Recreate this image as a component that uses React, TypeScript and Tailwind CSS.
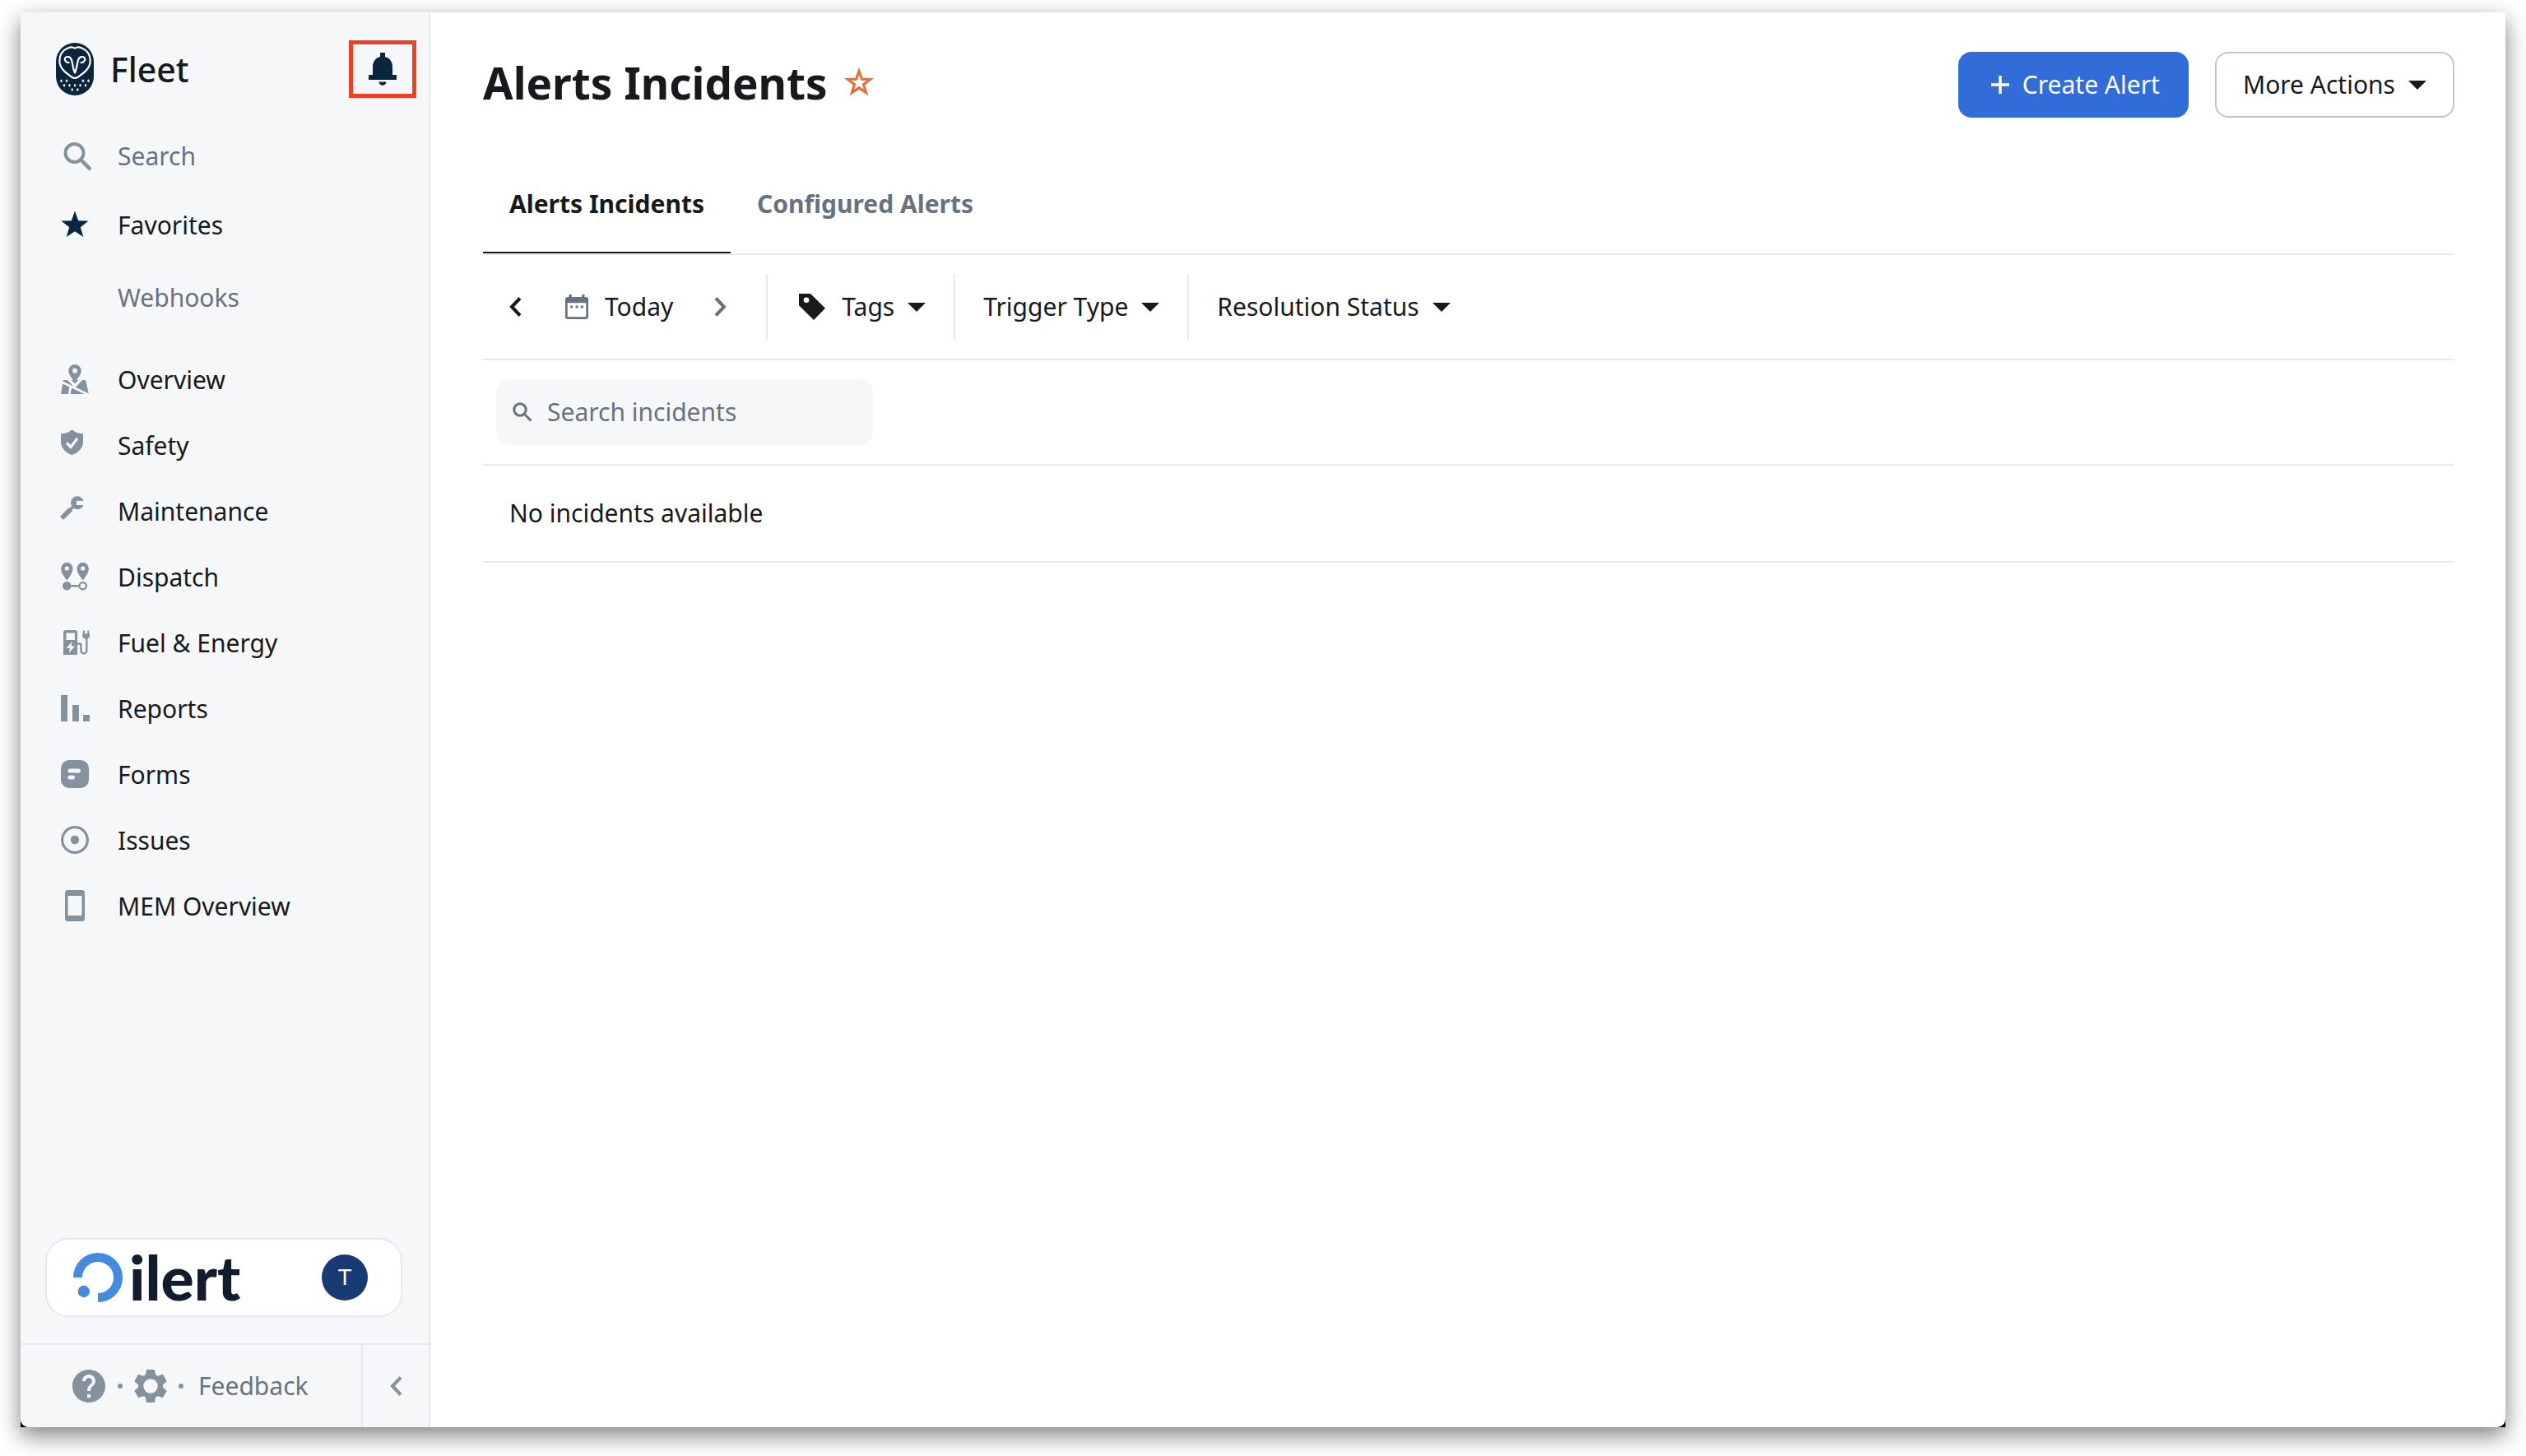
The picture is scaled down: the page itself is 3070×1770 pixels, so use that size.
import type { ReactNode } from "react";
import { MdHelp } from "react-icons/md";

function OwlLogo() {
  return (
    <svg viewBox="0 0 46 64" className="h-16 w-[46px] shrink-0" aria-hidden="true">
      <rect width="46" height="64" rx="23" fill="#0a253d" />
      <g fill="none" stroke="#fff" strokeWidth="2.2" strokeLinecap="round" strokeLinejoin="round">
        <path d="M23 6.7C20.5 5 17.500 5.200 15 6.200C8 9 4.300 15 4.300 22C4.300 32 14 38 19 41.500C21.500 43.300 24.500 43.300 27 41.500C32 38 41.700 32 41.700 22C41.700 15 38 9 31 6.200C28.500 5.200 25.500 5 23 6.700Z" />
        <path d="M15.500 24.200C12.500 24.500 10 21 11 18.800C12.500 16 17.500 16.300 19 21C20.500 26 21 33 23 36.500C25 33 25.500 26 27 21C28.500 16.300 33.500 16 35 18.800C36 21 33.500 24.500 30.500 24.200" />
      </g>
      <g fill="#fff">
        {[[6.5, 46.3], [13, 46.3], [33, 46.3], [39.5, 46.3], [10, 51.7], [16.5, 51.7], [23, 51.7], [29.5, 51.7], [36, 51.7], [19.7, 57], [26.3, 57]].map(([x, y]) => (
          <ellipse key={`${x}-${y}`} cx={x} cy={y} rx="1.2" ry="1.8" />
        ))}
      </g>
    </svg>
  );
}

function BellIcon() {
  return (
    <svg viewBox="0 0 34 40" className="h-10 w-[34px]" fill="#0a253d" aria-hidden="true">
      <path d="M14 0h6v5c5.500 1.300 9 6 9 12v10h5v6H0v-6h5V17C5 11 8.500 6.300 14 5Z" />
      <path d="M12.500 35.500h9c0 2.500-2 4.200-4.500 4.200s-4.500-1.700-4.500-4.200Z" />
    </svg>
  );
}

function NavIcon({ children }: { children?: ReactNode }) {
  return (
    <svg viewBox="0 0 36 40" className="h-10 w-9 shrink-0 overflow-visible" fill="#84919f" aria-hidden="true">
      {children}
    </svg>
  );
}

const BG = "#f6f7f9";
const INK = "#84919f";

const icons: Record<string, ReactNode> = {
  Overview: (
    <>
      <path d="M4 20h27l4 17H1Z" />
      <path d="M8.500 17L18 27L27.500 17" fill="none" stroke={BG} strokeWidth="3.500" />
      <path d="M1 22L35 38M13 28L11 38" stroke={BG} strokeWidth="2.800" />
      <path d="M18 22.500C14 17.500 10.300 13 10.300 8.700a7.700 7.700 0 0 1 15.400 0C25.700 13 22 17.500 18 22.500Z" />
      <circle cx="18" cy="8.700" r="3" fill={BG} />
    </>
  ),
  Safety: (
    <>
      <path d="M14.500 0C17 3 22 5 28 5v10c0 7.500-6 14-13.500 16C7 29 1 22.500 1 15V5C7 5 12 3 14.500 0Z" />
      <path d="M8 16.500l5 5L21 11" fill="none" stroke={BG} strokeWidth="3.200" />
    </>
  ),
  Maintenance: (
    <>
      <circle cx="21" cy="9.300" r="8" />
      <path d="M20 6.800h10v5.200H20Z" fill={BG} />
      <path d="M2 28L13 17" stroke={INK} strokeWidth="6" />
      <path d="M11 19L18 12" stroke={INK} strokeWidth="3.500" />
    </>
  ),
  Dispatch: (
    <>
      {[8.3, 27.7].map((x) => (
        <g key={x} transform={`translate(${x} 9)`}>
          <path d="M0 14.500C-3.800 9.500-7.200 5-7.200 0a7.200 7.200 0 0 1 14.400 0C7.200 5 3.800 9.500 0 14.500Z" />
          <circle r="2.600" fill={BG} />
        </g>
      ))}
      <path d="M8 30.300h15" stroke={INK} strokeWidth="2.500" />
      <circle cx="8.300" cy="30.300" r="5.300" />
      <circle cx="27.700" cy="30.300" r="4.200" fill="none" stroke={INK} strokeWidth="2.300" />
    </>
  ),
  "Fuel & Energy": (
    <>
      <path d="M4 7a3 3 0 0 1 3-3h11a3 3 0 0 1 3 3v27H4Z" />
      <path d="M7.500 7.500h10.500v8.500H7.500Z" fill={BG} />
      <path d="M14.500 18L7.500 26h4.500L10.800 32L18 23.500h-4.200Z" fill={BG} />
      <path d="M21 20.500h2.500q2 0 2 2V29a3.300 3.300 0 0 0 6.800 0V12" fill="none" stroke={INK} strokeWidth="2.400" />
      <path d="M28 4.500h2.200v4h3V4.500h2.200v4H36v3.500L33.500 14.500h-4L27.200 12V8.500h.8Z" />
    </>
  ),
  Reports: <path d="M1 3h8v32H1ZM15 15h8v20h-8ZM28 27h8v8h-8Z" />,
  Forms: (
    <>
      <rect x="1" y="2" width="34" height="34" rx="10" />
      <rect x="9.500" y="12.500" width="15.500" height="5" rx="2.500" fill={BG} />
      <rect x="9.500" y="20.500" width="8.500" height="5" rx="2.500" fill={BG} />
    </>
  ),
  Issues: (
    <>
      <circle cx="18" cy="19" r="15.400" fill="none" stroke={INK} strokeWidth="3.200" />
      <circle cx="18" cy="19" r="5.200" />
    </>
  ),
  "MEM Overview": (
    <>
      <rect x="6" y="0" width="24" height="38" rx="3.500" />
      <path d="M9.500 7h17v24h-17Z" fill={BG} />
    </>
  ),
};

const STAR = "M18 2.500L22.200 14.200L34.600 14.600L24.800 22.200L28.300 34.100L18 27.200L7.700 34.100L11.200 22.200L1.400 14.600L13.800 14.200Z";

function Chevron({ dir, className }: { dir: "left" | "right"; className: string }) {
  return (
    <svg viewBox="0 0 15 24" className={`h-6 w-[15px] shrink-0 ${className}`} fill="none" stroke="currentColor" strokeWidth="4" aria-hidden="true">
      <path d={dir === "left" ? "M13 1.500L3 12L13 22.500" : "M2 1.500L12 12L2 22.500"} />
    </svg>
  );
}

function Caret() {
  return (
    <svg viewBox="0 0 22 11" className="h-[11px] w-[22px] shrink-0" fill="currentColor" aria-hidden="true">
      <path d="M0 0h22L11 11Z" />
    </svg>
  );
}

function CalendarIcon() {
  return (
    <svg viewBox="0 0 28 30" className="h-[30px] w-7 shrink-0" fill="#667282" aria-hidden="true">
      <path d="M4.500 0h3.300v3h12.400V0h3.300v3H25a3 3 0 0 1 3 3v21a3 3 0 0 1-3 3H3a3 3 0 0 1-3-3V6a3 3 0 0 1 3-3h1.500ZM2.700 10.300v17h22.600v-17Z" fillRule="evenodd" />
      <path d="M6.200 13.500h3v3h-3ZM12.500 13.500h3v3h-3ZM18.800 13.500h3v3h-3Z" />
    </svg>
  );
}

function TagIcon() {
  return (
    <svg viewBox="0 0 32 32" className="h-8 w-8 shrink-0" aria-hidden="true">
      <path d="M0 0h14L32 17.700L18 32L0 14.300Z" fill="#17191c" />
      <circle cx="9" cy="7.700" r="3.300" fill="#fff" />
    </svg>
  );
}

function GearIcon() {
  return (
    <svg viewBox="-20 -20 40 40" className="size-10" fill="#84919f" aria-hidden="true">
      <defs>
        <mask id="gear-hole">
          <rect x="-20" y="-20" width="40" height="40" fill="#fff" />
          <circle r="8.700" fill="#000" />
        </mask>
      </defs>
      <g mask="url(#gear-hole)">
        <circle r="15" />
        {[0, 60, 120].map((a) => (
          <path key={a} transform={`rotate(${a})`} d="M-4.800-20h9.600l1.500 7v26l-1.500 7h-9.600l-1.500-7v-26Z" />
        ))}
      </g>
    </svg>
  );
}

function IlertLogo() {
  return (
    <div className="flex items-center gap-2">
      <svg viewBox="0 0 60 60" className="size-[60px] shrink-0" aria-hidden="true">
        <path d="M5.500 30A24.500 24.500 0 1 1 30 54.500" fill="none" stroke="#438bde" strokeWidth="11" />
        <circle cx="12.800" cy="47" r="7.200" fill="#438bde" />
      </svg>
      <span className="pb-0.5 font-['Lato',sans-serif] text-[75px] leading-[60px] font-black text-[#111c2d]">ilert</span>
    </div>
  );
}

const navItems = ["Overview", "Safety", "Maintenance", "Dispatch", "Fuel & Energy", "Reports", "Forms", "Issues", "MEM Overview"];

function Sidebar() {
  return (
    <aside className="flex w-[498px] shrink-0 flex-col border-r-2 border-[#e7e9ec] bg-[#f6f7f9] text-[30px] leading-10">
      <div className="mb-[31px] flex items-center pt-[34px] pr-[15px] pl-[43px]">
        <OwlLogo />
        <span className="ml-5 text-[41px] leading-[56px] font-medium">Fleet</span>
        <button type="button" aria-label="Notifications" className="ml-auto flex h-[70px] w-[82px] items-center justify-center border-[5px] border-[#ee4023]">
          <BellIcon />
        </button>
      </div>
      <nav className="flex flex-col">
        <button type="button" className="flex h-20 items-center gap-[34px] pl-12 text-left text-[#667282]">
          <NavIcon>
            <circle cx="17.500" cy="16" r="11" fill="none" stroke={INK} strokeWidth="4" />
            <path d="M25 24L37 36" stroke={INK} strokeWidth="4.500" />
          </NavIcon>
          Search
        </button>
        <a href="#favorites" className="mt-1 flex h-20 items-center gap-[34px] pl-12">
          <NavIcon>
            <path d={STAR} fill="#0a253d" />
          </NavIcon>
          Favorites
        </a>
        <a href="#webhooks" className="mt-2 mb-5 flex h-20 items-center gap-[34px] pl-12 text-[#667282]">
          <span className="w-9 shrink-0" />
          Webhooks
        </a>
        {navItems.map((label) => (
          <a key={label} href={`#${label}`} className="flex h-20 items-center gap-[34px] pl-12">
            <NavIcon>{icons[label]}</NavIcon>
            {label}
          </a>
        ))}
      </nav>
      <div className="mt-auto mr-8 mb-8 ml-[30px] flex h-24 items-center justify-between rounded-[28px] border-2 border-[#e7e9ec] bg-white pr-10 pl-8">
        <IlertLogo />
        <button type="button" aria-label="Account" className="flex size-14 items-center justify-center rounded-full bg-[#193b73] font-['Liberation_Sans',sans-serif] text-[28px] leading-8 text-white">
          T
        </button>
      </div>
      <div className="flex h-[102px] border-t-2 border-[#e7e9ec] text-[#667282]">
        <div className="flex flex-1 items-center border-r-2 border-[#e7e9ec] pl-[59px]">
          <button type="button" aria-label="Help">
            <MdHelp className="size-12 text-[#84919f]" />
          </button>
          <span className="ml-[11px] size-1.5 rounded-full bg-[#84919f]" />
          <button type="button" aria-label="Settings" className="ml-[14px]">
            <GearIcon />
          </button>
          <span className="ml-[14px] size-1.5 rounded-full bg-[#84919f]" />
          <a href="#feedback" className="ml-[18px]">Feedback</a>
        </div>
        <button type="button" aria-label="Collapse sidebar" className="flex w-20 items-center justify-center">
          <Chevron dir="left" className="text-[#84919f]" />
        </button>
      </div>
    </aside>
  );
}

function Filter({ label, icon, last }: { label: string; icon?: ReactNode; last?: boolean }) {
  return (
    <button type="button" aria-haspopup="listbox" className={`flex h-20 items-center px-[34px] whitespace-nowrap ${last ? "" : "border-r-2 border-[#e7e9ec]"}`}>
      {icon && <span className="mr-5 ml-1">{icon}</span>}
      <span className="mr-4">{label}</span>
      <Caret />
    </button>
  );
}

export default function App() {
  return (
    <div className="flex min-h-screen bg-white pt-[15px] pr-[25px] pb-[35px] pl-[25px] font-['Noto_Sans',sans-serif] text-[#17191c]">
      <div className="flex flex-1 bg-black shadow-[0_10px_26px_rgba(0,0,0,0.5)]">
        <div className="flex flex-1 overflow-hidden rounded-b-[10px] bg-white">
          <Sidebar />
          <main className="min-w-0 flex-1 pt-12 pr-[62px] pl-16 text-[30px] leading-10">
            <header className="flex h-20 items-center">
              <h1 className="pb-1 text-[53px] leading-[72px] font-bold">Alerts Incidents</h1>
              <button type="button" aria-label="Add to favorites" className="ml-5 pb-1">
                <svg viewBox="0 0 36 40" className="h-10 w-9" fill="none" stroke="#e0713a" strokeWidth="3.200" aria-hidden="true">
                  <path d="M18 5.500L21.500 15.200L31.500 15.500L23.600 21.600L26.500 31.500L18 25.800L9.500 31.500L12.400 21.600L4.500 15.500L14.500 15.200Z" />
                </svg>
              </button>
              <div className="ml-auto flex gap-8">
                <button type="button" className="flex h-20 items-center gap-4 rounded-2xl bg-[#316cd8] pr-[35px] pl-10 text-white">
                  <svg viewBox="0 0 22 22" className="size-[22px]" stroke="currentColor" strokeWidth="3.500" aria-hidden="true">
                    <path d="M11 0v22M0 11h22" />
                  </svg>
                  Create Alert
                </button>
                <button type="button" aria-haspopup="menu" className="flex h-20 items-center gap-4 rounded-2xl border-2 border-[#c0c6cf] px-8">
                  More Actions
                  <Caret />
                </button>
              </div>
            </header>

            <div role="tablist" className="mt-[67px] flex border-b-2 border-[#e7e9ec] font-bold">
              <button type="button" role="tab" aria-selected="true" className="border-b-2 border-[#17191c] px-8 pt-[18px] pb-[38px]">
                Alerts Incidents
              </button>
              <button type="button" role="tab" aria-selected="false" className="px-8 pt-[18px] pb-10 text-[#667282]">
                Configured Alerts
              </button>
            </div>

            <div className="flex items-center border-b-2 border-[#e7e9ec] py-[23px]">
              <div className="flex h-20 items-center border-r-2 border-[#e7e9ec] pr-12 pl-8">
                <button type="button" aria-label="Previous day">
                  <Chevron dir="left" className="" />
                </button>
                <button type="button" className="mr-[50px] ml-[53px] flex items-center gap-5">
                  <CalendarIcon />
                  Today
                </button>
                <button type="button" aria-label="Next day">
                  <Chevron dir="right" className="text-[#667282]" />
                </button>
              </div>
              <Filter label="Tags" icon={<TagIcon />} />
              <Filter label="Trigger Type" />
              <Filter label="Resolution Status" last />
            </div>

            <div className="border-b-2 border-[#e7e9ec] px-4 py-[23px]">
              <label className="flex h-20 w-[458px] items-center gap-[18px] rounded-2xl bg-[#f6f7f9] px-5">
                <svg viewBox="0 0 24 24" className="size-6 shrink-0" fill="none" stroke="#667282" strokeWidth="3" aria-hidden="true">
                  <circle cx="9" cy="9" r="7.200" />
                  <path d="M14 14L22.500 22.500" />
                </svg>
                <input type="text" aria-label="Search incidents" placeholder="Search incidents" className="min-w-0 flex-1 bg-transparent outline-none placeholder:text-[#667282]" />
              </label>
            </div>

            <p className="border-b-2 border-[#e7e9ec] px-8 py-[38px]">No incidents available</p>
          </main>
        </div>
      </div>
    </div>
  );
}
